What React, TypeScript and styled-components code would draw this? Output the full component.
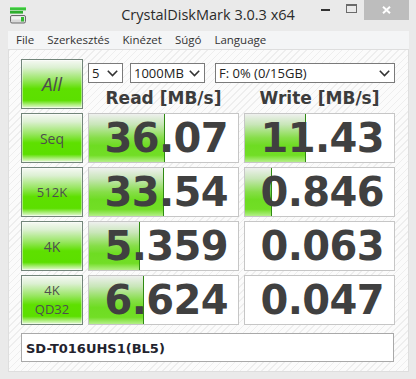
import * as React from "react";
import styled, { createGlobalStyle } from "styled-components";

const Global = createGlobalStyle`
  html, body {
    margin: 0;
    padding: 0;
    background: #eaeaea;
  }
`;

const Window = styled.div`
  width: 416px;
  height: 379px;
  background: #eaeaea;
  display: flex;
  flex-direction: column;
  font-family: "Open Sans", "DejaVu Sans", sans-serif;
  overflow: hidden;
`;

const TitleBar = styled.div`
  height: 31px;
  display: grid;
  grid-template-columns: 1fr auto 1fr;
  align-items: start;
`;

const AppIcon = styled.div`
  padding: 7px 0 0 10px;
  line-height: 0;
`;

const Title = styled.div`
  font-size: 14.5px;
  color: #2b2b2b;
  padding-top: 5px;
  line-height: 20px;
`;

const Controls = styled.div`
  display: flex;
  justify-content: flex-end;
  padding-right: 7px;
`;

const CtrlButton = styled.div<{ $w: number; $close?: boolean }>`
  width: ${(p) => p.$w}px;
  height: 20px;
  display: flex;
  align-items: center;
  justify-content: center;
  background: ${(p) => (p.$close ? "#bdbdbd" : "transparent")};
`;

const Body = styled.div`
  flex: 1;
  display: flex;
  flex-direction: column;
  padding: 0 7px 7px 8px;
`;

const MenuBar = styled.div`
  height: 18px;
  background: #f4f5f6;
  display: flex;
  align-items: center;
  padding-left: 8px;
  gap: 13px;
`;

const MenuItem = styled.span`
  font-size: 11.5px;
  color: #333;
  line-height: 18px;
`;

const Panel = styled.div`
  flex: 1;
  border: 1px solid #dedede;
  background: repeating-linear-gradient(
    135deg,
    #eeeeee 0 1px,
    #fbfbfb 1px 5px
  );
  padding: 9px 0 9px 12px;
  display: flex;
  flex-direction: column;
`;

const Grid = styled.div`
  display: grid;
  grid-template-columns: 62px 151px 151px;
  grid-auto-rows: 50px;
  column-gap: 5px;
  row-gap: 4px;
  & > :first-child {
    margin-right: -1px;
  }
`;

const GreenButton = styled.div<{ $size: number; $italic?: boolean }>`
  box-sizing: border-box;
  width: 62px;
  height: 50px;
  border: 1px solid #72857a;
  background: linear-gradient(
    to bottom,
    #f6f9f4 0%,
    #dcf0d2 16%,
    #96e65e 42%,
    #5ee000 60%,
    #5cdf00 84%,
    #b6f08a 94%,
    #e6fad8 100%
  );
  box-shadow: inset 0 0 0 1px rgba(255, 255, 255, 0.45);
  display: flex;
  align-items: center;
  justify-content: center;
  text-align: center;
  font-size: ${(p) => p.$size}px;
  font-style: ${(p) => (p.$italic ? "italic" : "normal")};
  line-height: 19px;
  color: #4e4e4e;
`;

const TopArea = styled.div`
  grid-column: 2 / 4;
  display: flex;
  flex-direction: column;
`;

const SelectRow = styled.div`
  display: flex;
  margin-top: 4px;
  height: 20px;
`;

const Select = styled.div<{ $w?: number; $gap: number }>`
  box-sizing: border-box;
  ${(p) => (p.$w ? `width: ${p.$w}px;` : "flex: 1;")}
  margin-right: ${(p) => p.$gap}px;
  height: 20px;
  border: 1px solid #7a7a7a;
  background: #fff;
  display: flex;
  align-items: center;
  justify-content: space-between;
  padding: 0 4px 0 3px;
  font-size: 13px;
  color: #222;
`;

const HeaderRow = styled.div`
  display: grid;
  grid-template-columns: 151px 151px;
  column-gap: 5px;
  margin-top: 5px;
`;

const Header = styled.div`
  text-align: center;
  font-family: "DejaVu Sans", sans-serif;
  font-weight: bold;
  font-size: 17px;
  line-height: 20px;
  color: #3c3c3c;
`;

const Cell = styled.div`
  box-sizing: border-box;
  position: relative;
  border: 1px solid #c6c6c6;
  background: #fff;
  overflow: hidden;
`;

const Bar = styled.div`
  position: absolute;
  left: 0;
  top: 0;
  bottom: 0;
  border-right: 1px solid #2f8a12;
  background: linear-gradient(
    to bottom,
    #eef0ee 0%,
    #c8e6b8 22%,
    #86de48 50%,
    #6edc22 66%,
    #72de26 86%,
    #b4ef88 100%
  );
`;

const Value = styled.div`
  position: relative;
  text-align: right;
  padding-right: 10px;
  font-family: "DejaVu Sans", sans-serif;
  font-weight: bold;
  font-size: 40px;
  letter-spacing: -0.6px;
  line-height: 49px;
  color: #404040;
`;

const NameField = styled.div`
  box-sizing: border-box;
  margin-top: 8px;
  width: 373px;
  height: 29px;
  border: 1px solid #a9a9a9;
  background: #fff;
  display: flex;
  align-items: center;
  padding: 2px 0 0 4px;
  font-family: "DejaVu Sans", sans-serif;
  font-weight: bold;
  font-size: 13px;
  color: #23232e;
`;

const Chevron = () => (
  <svg width="11" height="7" viewBox="0 0 11 7">
    <path d="M0.8 0.8 L5.5 5.5 L10.2 0.8" fill="none" stroke="#333" strokeWidth="1.6" />
  </svg>
);

const DiskIcon = () => (
  <svg width="17" height="17" viewBox="0 0 17 17">
    <rect x="0" y="0" width="16" height="3.4" fill="#3cc23c" />
    <rect x="0" y="0" width="16" height="1" fill="#6fe06f" />
    <rect x="0" y="4" width="13" height="2.6" fill="#2fae2f" />
    <rect x="0.5" y="8.5" width="15" height="7.5" rx="1.5" fill="#d9d9d9" stroke="#6a6a6a" />
    <rect x="1.5" y="9.5" width="13" height="3" fill="#f2f2f2" />
    <rect x="11" y="10" width="3" height="4.5" fill="#32b832" />
  </svg>
);

type Row = {
  label: React.ReactNode;
  size: number;
  read: string;
  readBar: number;
  write: string;
  writeBar: number;
};

const rows: Row[] = [
  { label: "Seq", size: 14, read: "36.07", readBar: 75, write: "11.43", writeBar: 60 },
  { label: "512K", size: 13, read: "33.54", readBar: 74, write: "0.846", writeBar: 26 },
  { label: "4K", size: 14, read: "5.359", readBar: 50, write: "0.063", writeBar: 0 },
  {
    label: (
      <>
        4K
        <br />
        QD32
      </>
    ),
    size: 13,
    read: "6.624",
    readBar: 54,
    write: "0.047",
    writeBar: 0,
  },
];

const Result = ({ value, bar }: { value: string; bar: number }) => (
  <Cell>
    {bar > 0 && <Bar style={{ width: bar }} />}
    <Value>{value}</Value>
  </Cell>
);

export default function App() {
  return (
    <Window>
      <Global />
      <TitleBar>
        <AppIcon>
          <DiskIcon />
        </AppIcon>
        <Title>CrystalDiskMark 3.0.3 x64</Title>
        <Controls>
          <CtrlButton $w={26}>
            <svg width="9" height="2" viewBox="0 0 9 2">
              <rect width="9" height="2" fill="#333" />
            </svg>
          </CtrlButton>
          <CtrlButton $w={26}>
            <svg width="11" height="9" viewBox="0 0 11 9" style={{ marginTop: -4 }}>
              <rect x="0.5" y="0.5" width="10" height="8" fill="none" stroke="#6b6b6b" />
              <rect x="0.5" y="0.5" width="10" height="1.5" fill="#6b6b6b" />
            </svg>
          </CtrlButton>
          <CtrlButton $w={45} $close>
            <svg width="9" height="8" viewBox="0 0 9 8">
              <path d="M1 0.8 L8 7.2 M8 0.8 L1 7.2" stroke="#fff" strokeWidth="2" />
            </svg>
          </CtrlButton>
        </Controls>
      </TitleBar>
      <Body>
        <MenuBar>
          <MenuItem>File</MenuItem>
          <MenuItem>Szerkesztés</MenuItem>
          <MenuItem>Kinézet</MenuItem>
          <MenuItem>Súgó</MenuItem>
          <MenuItem>Language</MenuItem>
        </MenuBar>
        <Panel>
          <Grid>
            <GreenButton $size={19} $italic>
              All
            </GreenButton>
            <TopArea>
              <SelectRow>
                <Select $w={35} $gap={7}>
                  <span>5</span>
                  <Chevron />
                </Select>
                <Select $w={75} $gap={10}>
                  <span>1000MB</span>
                  <Chevron />
                </Select>
                <Select $gap={0}>
                  <span>F: 0% (0/15GB)</span>
                  <Chevron />
                </Select>
              </SelectRow>
              <HeaderRow>
                <Header>Read [MB/s]</Header>
                <Header>Write [MB/s]</Header>
              </HeaderRow>
            </TopArea>
            {rows.map((r, i) => (
              <React.Fragment key={i}>
                <GreenButton $size={r.size}>{r.label}</GreenButton>
                <Result value={r.read} bar={r.readBar} />
                <Result value={r.write} bar={r.writeBar} />
              </React.Fragment>
            ))}
          </Grid>
          <NameField>SD-T016UHS1(BL5)</NameField>
        </Panel>
      </Body>
    </Window>
  );
}
